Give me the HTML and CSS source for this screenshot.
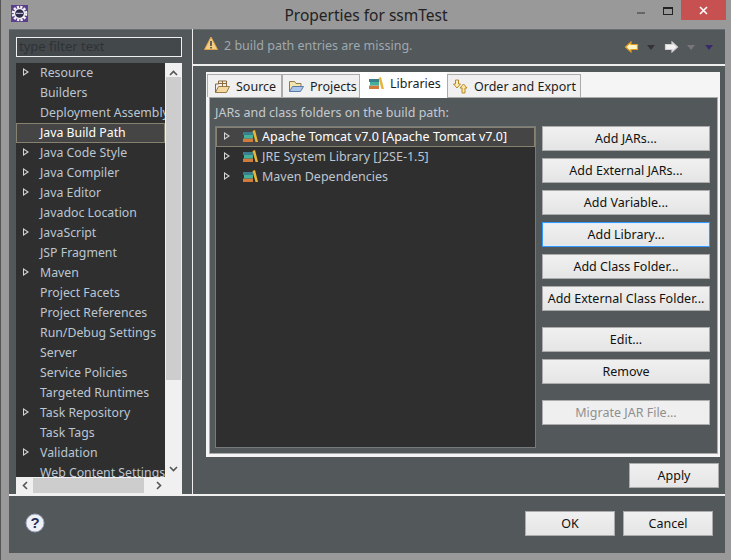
FILE: index.html
```html
<!DOCTYPE html>
<html lang="en">
<head>
    <meta charset="UTF-8" />
    <title>Properties for ssmTest</title>
    <link rel="stylesheet" href="styles.css">
</head>
<body>
    <div class="window">
        <div class="titlebar">
            <svg class="app-icon" width="17" height="17" viewBox="0 0 17 17">
                <rect width="17" height="17" fill="#5a3f8c"/>
                <circle cx="8.5" cy="8.5" r="6.5" fill="none" stroke="#f4f4f4" stroke-width="2.6" stroke-dasharray="2.200 1.200"/>
                <circle cx="8.5" cy="8.5" r="5" fill="#2d2a4a" stroke="#f0f0f0" stroke-width="1.400"/>
                <rect x="5" y="7.800" width="7" height="1.200" fill="#b9b5d0"/>
            </svg>
            <div class="title">Properties for ssmTest</div>
            <div class="win-controls">
                <span class="win-min"></span>
                <span class="win-max"></span>
                <span class="win-close">
                    <svg width="9" height="9" viewBox="0 0 9 9"><path d="M1 1l7 7M8 1l-7 7" stroke="#fff" stroke-width="1.6"/></svg>
                </span>
            </div>
        </div>

        <div class="dialog">
            <div class="main">
                <div class="sidebar">
                    <div class="filter">type filter text</div>
                    <div class="tree-box">
                        <div class="tree-top">
                            <ul class="tree">
                                <li class="arrow">Resource</li>
                                <li>Builders</li>
                                <li>Deployment Assembly</li>
                                <li class="current">Java Build Path</li>
                                <li class="arrow">Java Code Style</li>
                                <li class="arrow">Java Compiler</li>
                                <li class="arrow">Java Editor</li>
                                <li>Javadoc Location</li>
                                <li class="arrow">JavaScript</li>
                                <li>JSP Fragment</li>
                                <li class="arrow">Maven</li>
                                <li>Project Facets</li>
                                <li>Project References</li>
                                <li>Run/Debug Settings</li>
                                <li>Server</li>
                                <li>Service Policies</li>
                                <li>Targeted Runtimes</li>
                                <li class="arrow">Task Repository</li>
                                <li>Task Tags</li>
                                <li class="arrow">Validation</li>
                                <li>Web Content Settings</li>
                            </ul>
                            <div class="vscroll">
                                <svg class="chev" width="9" height="6" viewBox="0 0 9 6"><path d="M1 5l3.500-3.500L8 5" fill="none" stroke="#555" stroke-width="1.6"/></svg>
                                <div class="vthumb"></div>
                                <svg class="chev" width="9" height="6" viewBox="0 0 9 6"><path d="M1 1l3.500 3.500L8 1" fill="none" stroke="#555" stroke-width="1.6"/></svg>
                            </div>
                        </div>
                        <div class="hscroll">
                            <svg width="6" height="9" viewBox="0 0 6 9"><path d="M5 1L1.500 4.500 5 8" fill="none" stroke="#555" stroke-width="1.6"/></svg>
                            <div class="hthumb"></div>
                            <svg width="6" height="9" viewBox="0 0 6 9"><path d="M1 1l3.500 3.500L1 8" fill="none" stroke="#555" stroke-width="1.6"/></svg>
                        </div>
                    </div>
                </div>

                <div class="content">
                    <div class="message">
                        <svg class="warn" width="14" height="15" viewBox="0 0 14 15"><path d="M7 1L13.500 13.500H.5z" fill="#f3cf86" stroke="#d9a24a" stroke-linejoin="round"/><path d="M7 5v5M7 11v1.600" stroke="#444" stroke-width="1.600"/></svg>
                        <span class="message-text">2 build path entries are missing.</span>
                        <div class="nav">
                            <svg width="15" height="12" viewBox="0 0 15 12"><path d="M7 1L1.500 6 7 11V8.500h6.500v-5H7z" fill="#fff3c4" stroke="#e09a1e" stroke-width="1.200"/></svg>
                            <span class="drop"></span>
                            <svg width="15" height="12" viewBox="0 0 15 12"><path d="M8 1l5.500 5L8 11V8.500H1.500v-5H8z" fill="#f2f2f2" stroke="#cfcfcf" stroke-width="1.200"/></svg>
                            <span class="drop drop-off"></span>
                            <span class="drop drop-menu"></span>
                        </div>
                    </div>

                    <div class="tabs-wrap">
                        <div class="tabs">
                            <div class="tab tab-source">
                                <svg width="15" height="13" viewBox="0 0 15 13"><path d="M.5 12.500l3-6h11l-3 6z" fill="#f4d9a0" stroke="#9a7a48"/><path d="M.5 12.500V4h3V1h8v5.500" fill="none" stroke="#8a6a3c"/><path d="M7.500 1v5.500M3.500 3.500h8" stroke="#8a6a3c"/></svg>
                                Source
                            </div>
                            <div class="tab tab-projects">
                                <svg width="15" height="13" viewBox="0 0 15 13"><path d="M.5 11.500V1.500h5L7 3.500h5v3" fill="#f3e3ac" stroke="#8a7a50"/><path d="M.5 11.500l3-5h11l-3 5z" fill="#a9c6ea" stroke="#5a7aa8"/></svg>
                                Projects
                            </div>
                            <div class="tab tab-active">
                                <svg width="15" height="12" viewBox="0 0 15 12"><rect x="0" y="8.500" width="10" height="3.500" fill="#d07a3c"/><rect x="1" y="5" width="9" height="3.500" fill="#46b09a"/><rect x="0" y="2" width="10" height="3" fill="#3a7f8c"/><path d="M9.500 1L12 0l3 12h-2.500z" fill="#e8b53a"/></svg>
                                Libraries
                            </div>
                            <div class="tab tab-order">
                                <svg width="15" height="15" viewBox="0 0 15 15"><path d="M2.500 1h3v4h2L4 9 .5 5h2z" fill="#fbeebb" stroke="#b8892a"/><path d="M10.500 5l3.500 4h-2v5H9V9H7z" fill="#fbe7a0" stroke="#b8892a"/></svg>
                                Order and Export
                            </div>
                        </div>
                        <div class="tab-page">
                            <div class="page-label">JARs and class folders on the build path:</div>
                            <div class="page-body">
                                <ul class="libs">
                                    <li class="current">
                                        <span class="lib-arrow"></span>
                                        <svg width="15" height="12" viewBox="0 0 15 12"><rect x="0" y="8.500" width="10" height="3.500" fill="#d07a3c"/><rect x="1" y="5" width="9" height="3.500" fill="#46b09a"/><rect x="0" y="2" width="10" height="3" fill="#3a7f8c"/><path d="M9.500 1L12 0l3 12h-2.500z" fill="#e8b53a"/></svg>
                                        Apache Tomcat v7.0 [Apache Tomcat v7.0]
                                    </li>
                                    <li>
                                        <span class="lib-arrow"></span>
                                        <svg width="15" height="12" viewBox="0 0 15 12"><rect x="0" y="8.500" width="10" height="3.500" fill="#d07a3c"/><rect x="1" y="5" width="9" height="3.500" fill="#46b09a"/><rect x="0" y="2" width="10" height="3" fill="#3a7f8c"/><path d="M9.500 1L12 0l3 12h-2.500z" fill="#e8b53a"/></svg>
                                        JRE System Library [J2SE-1.5]
                                    </li>
                                    <li>
                                        <span class="lib-arrow"></span>
                                        <svg width="15" height="12" viewBox="0 0 15 12"><rect x="0" y="8.500" width="10" height="3.500" fill="#d07a3c"/><rect x="1" y="5" width="9" height="3.500" fill="#46b09a"/><rect x="0" y="2" width="10" height="3" fill="#3a7f8c"/><path d="M9.500 1L12 0l3 12h-2.500z" fill="#e8b53a"/></svg>
                                        Maven Dependencies
                                    </li>
                                </ul>
                                <div class="side-buttons">
                                    <button class="btn">Add JARs...</button>
                                    <button class="btn">Add External JARs...</button>
                                    <button class="btn">Add Variable...</button>
                                    <button class="btn btn-focus">Add Library...</button>
                                    <button class="btn">Add Class Folder...</button>
                                    <button class="btn">Add External Class Folder...</button>
                                    <button class="btn btn-gap">Edit...</button>
                                    <button class="btn">Remove</button>
                                    <button class="btn btn-gap btn-off">Migrate JAR File...</button>
                                </div>
                            </div>
                        </div>
                    </div>

                    <div class="apply-row">
                        <button class="btn btn-wide">Apply</button>
                    </div>
                </div>
            </div>

            <div class="footer">
                <svg class="help" width="20" height="20" viewBox="0 0 20 20">
                    <circle cx="10" cy="10" r="9" fill="#eef0f6" stroke="#9aa3bd"/>
                    <text x="10" y="15" text-anchor="middle" class="help-mark">?</text>
                </svg>
                <div class="footer-buttons">
                    <button class="btn btn-wide">OK</button>
                    <button class="btn btn-wide">Cancel</button>
                </div>
            </div>
        </div>
    </div>
</body>
</html>
```

FILE: styles.css
```css
* {
    box-sizing: border-box;
}

body {
    margin: 0;
    padding: 0;
    font-family: 'Noto Sans', sans-serif;
    font-size: 12.5px;
    background-color: #9a9a9a;
    overflow: hidden;
}

ul {
    list-style: none;
    margin: 0;
    padding: 0;
}

.window {
    width: 731px;
    height: 560px;
    display: flex;
    flex-direction: column;
    background-color: #999;
    border-left: 1px solid #555;
}

/* title bar */
.titlebar {
    position: relative;
    height: 29px;
    flex: none;
    display: flex;
    align-items: center;
    padding-left: 10px;
}

.app-icon {
    margin-top: -2px;
}

.title {
    position: absolute;
    left: 0;
    right: 0;
    top: 5px;
    text-align: center;
    font-size: 15.5px;
    line-height: 20px;
    color: #222;
}

.win-controls {
    position: absolute;
    top: 0;
    right: 5px;
    display: flex;
    align-items: flex-start;
}

.win-min {
    width: 8px;
    height: 2px;
    margin: 12px 18px 0 0;
    background-color: #666;
}

.win-max {
    width: 10px;
    height: 8px;
    margin: 7px 8px 0 0;
    border: 1px solid #222;
    border-top-width: 2px;
}

.win-close {
    width: 45px;
    height: 20px;
    background-color: #c75050;
    display: flex;
    align-items: center;
    justify-content: center;
}

/* dialog body */
.dialog {
    flex: 1;
    margin: 0 6px 7px 8px;
    display: flex;
    flex-direction: column;
    background-color: #53585b;
    min-height: 0;
    box-shadow: inset 0 1px 0 #6a6e70;
}

.main {
    height: 467px;
    flex: none;
    display: flex;
    border-bottom: 2px solid #f0f0f0;
}

.sidebar {
    width: 184px;
    flex: none;
    padding: 8px 0 0 7px;
    border-right: 1px solid #eee;
}

.filter {
    width: 166px;
    height: 20px;
    border: 1.5px solid #f0f0f0;
    background-color: #43484b;
    color: #2f3336;
    padding-left: 2px;
    line-height: 17px;
    font-size: 13px;
}

.tree-box {
    width: 166px;
    margin-top: 6px;
}

.tree-top {
    display: flex;
    height: 414px;
}

.tree {
    width: 149px;
    height: 414px;
    overflow: hidden;
    background-color: #2f2f2f;
    color: #bcc6d2;
    font-size: 12.3px;
}

.tree li {
    position: relative;
    height: 20px;
    line-height: 19px;
    padding-left: 24px;
    white-space: nowrap;
}

/* hollow expand triangle: outer in light, inner in the row colour */
.tree li.arrow::before,
.lib-arrow {
    content: "";
    position: absolute;
    left: 7px;
    top: 5px;
    width: 0;
    height: 0;
    border-left: 6px solid #d4d4d4;
    border-top: 4.500px solid transparent;
    border-bottom: 4.500px solid transparent;
}

.tree li.arrow::after,
.lib-arrow::after {
    content: "";
    position: absolute;
    left: 8px;
    top: 7px;
    width: 0;
    height: 0;
    border-left: 3.500px solid #2f2f2f;
    border-top: 2.500px solid transparent;
    border-bottom: 2.500px solid transparent;
}

.lib-arrow::after {
    left: -5px;
    top: -2.500px;
}

.tree li.current {
    background-color: #454545;
    border: 1px solid #86826f;
    color: #fff;
    line-height: 17px;
    padding-left: 23px;
}

.vscroll {
    width: 17px;
    background-color: #f0f0f0;
    display: flex;
    flex-direction: column;
    align-items: center;
    justify-content: space-between;
    padding: 7px 0 5px;
}

.vthumb {
    width: 15px;
    height: 303px;
    margin-top: -3px;
    margin-bottom: 82px;
    background-color: #cdcdcd;
}

.hscroll {
    height: 17px;
    background-color: #f0f0f0;
    display: flex;
    align-items: center;
    padding: 0 4px 0 6px;
    gap: 5px;
}

.hthumb {
    width: 111px;
    height: 15px;
    background-color: #cdcdcd;
    margin-right: 7px;
}

/* right side */
.content {
    flex: 1;
    display: flex;
    flex-direction: column;
    min-width: 0;
}

.message {
    height: 37px;
    flex: none;
    display: flex;
    align-items: center;
    padding: 0 12px 2px 11px;
    border-bottom: 2px solid #eee;
    gap: 6px;
}

.warn {
    margin-top: -5px;
}

.message-text {
    flex: 1;
    color: #9fa8ae;
}

.nav {
    display: flex;
    align-items: center;
    margin-top: 3px;
}

.nav .drop {
    margin: 0 9px 0 8px;
}

.nav .drop-off {
    border-top-color: #777;
    margin-right: 10px;
}

.nav .drop-menu {
    margin: 0;
    border-top-color: #3b2a6b;
}

.drop {
    width: 0;
    height: 0;
    border-left: 4px solid transparent;
    border-right: 4px solid transparent;
    border-top: 5px solid #333;
}

.tabs-wrap {
    width: 514px;
    height: 385px;
    margin: 6px 0 0 13px;
    background-color: #f5f5f5;
    padding: 2px 2px 3px 3px;
    display: flex;
    flex-direction: column;
}

.tabs {
    display: flex;
    height: 23px;
    flex: none;
    margin-left: -2px;
    align-items: flex-end;
}

.tab {
    height: 23px;
    display: flex;
    align-items: center;
    gap: 6px;
    background-color: #f0f0f0;
    border: 1px solid #ababab;
    border-bottom: none;
    color: #1c1c1c;
}

.tab-source {
    width: 75px;
    padding-left: 7px;
}

.tab-projects {
    width: 78px;
    padding-left: 6px;
}

.tab-order {
    width: 134px;
    padding-left: 5px;
}

.tab-active {
    position: relative;
    width: 87px;
    height: 26px;
    margin: -2px 0 -1px;
    padding: 0 0 4px 9px;
    background-color: #fff;
    border: none;
}

.tab-page {
    flex: 1;
    background-color: #53585b;
    border: 1px solid #ababab;
    padding: 0 7px 5px 5px;
    display: flex;
    flex-direction: column;
    min-height: 0;
}

.page-label {
    height: 28px;
    line-height: 30px;
    color: #c4cad0;
}

.page-body {
    flex: 1;
    display: flex;
    gap: 6px;
    min-height: 0;
}

.libs {
    flex: 1;
    background-color: #2f2f2f;
    border: 1px solid #757a7d;
    color: #bcc6d2;
}

.libs li {
    position: relative;
    height: 20px;
    display: flex;
    align-items: center;
    padding-left: 27px;
    padding-bottom: 2px;
    gap: 4px;
    white-space: nowrap;
}

.libs .lib-arrow {
    left: 8px;
}

.libs li.current {
    background-color: #454545;
    border: 1px solid #86826f;
    color: #fff;
    padding-left: 26px;
}

.libs li.current .lib-arrow {
    left: 7px;
    top: 4px;
}

.libs li.current .lib-arrow::after {
    border-left-color: #454545;
}

.side-buttons {
    width: 168px;
    flex: none;
    display: flex;
    flex-direction: column;
    gap: 7px;
}

.btn {
    height: 25px;
    flex: none;
    padding: 0 0 1px;
    font-family: 'Noto Sans', sans-serif;
    font-size: 12.5px;
    color: #111;
    background: linear-gradient(#f0f0f0, #e5e5e5);
    border: 1px solid #acacac;
}

.btn-focus {
    border: 1px solid #3399ff;
    box-shadow: inset 0 0 0 1px #dcecfc;
}

.btn-gap {
    margin-top: 9px;
}

.btn-off {
    background: #efefef;
    color: #8f8f8f;
}

.btn-wide {
    width: 90px;
}

.apply-row {
    display: flex;
    justify-content: flex-end;
    padding: 6px 6px 0 0;
}

/* footer */
.footer {
    flex: 1;
    display: flex;
    align-items: center;
    justify-content: space-between;
    padding: 0 12px 2px 16px;
}

.help {
    margin-top: -2px;
}

.help-mark {
    font-family: 'Liberation Sans', sans-serif;
    font-weight: bold;
    font-size: 15px;
    fill: #27305a;
}

.footer-buttons {
    display: flex;
    gap: 8px;
}
```
